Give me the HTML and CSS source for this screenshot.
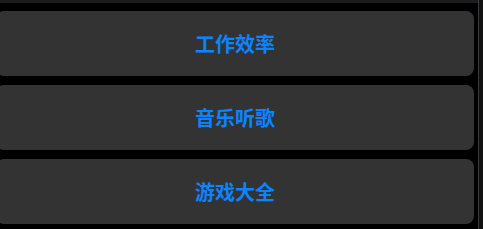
FILE: index.html
```html
<!DOCTYPE html>
<html lang="zh-CN">
<head>
    <meta charset="UTF-8">
    <title>分类</title>
    <link rel="stylesheet" href="styles.css">
</head>
<body>
    <div class="top-bar"></div>
    <div class="page">
        <!-- Category list -->
        <div class="menu">
            <button class="menu-item">工作效率</button>
            <button class="menu-item">音乐听歌</button>
            <button class="menu-item">游戏大全</button>
        </div>
        <div class="scroll-track"></div>
    </div>
</body>
</html>
```

FILE: styles.css
```css
body {
    margin: 0;
    background-color: #000;
    font-family: "Noto Sans CJK SC", "Noto Sans", sans-serif;
    overflow: hidden;
}
.top-bar {
    height: 3px;
    background-color: #1c1c1e;
}
.page {
    display: flex;
    height: 226px;
}
.menu {
    flex: 1;
    display: flex;
    flex-direction: column;
    gap: 9px;
    padding-top: 8px;
    margin-left: -4px;
    margin-right: 4px;
}
.menu-item {
    height: 65px;
    background-color: #333333;
    border: none;
    border-radius: 8px;
    color: #0a84ff;
    font-family: inherit;
    font-size: 20px;
    font-weight: 700;
    padding: 0;
}
.scroll-track {
    width: 4px;
    border-left: 1px solid #3a3a3c;
    background-color: #111;
    margin-top: -3px;
}
```
